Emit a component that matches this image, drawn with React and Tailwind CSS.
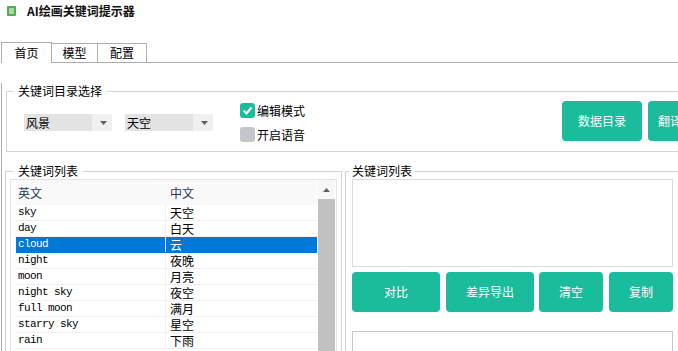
import React from "react";

const rows = [
  ["sky", "天空"],
  ["day", "白天"],
  ["cloud", "云"],
  ["night", "夜晚"],
  ["moon", "月亮"],
  ["night sky", "夜空"],
  ["full moon", "满月"],
  ["starry sky", "星空"],
  ["rain", "下雨"],
];

const Dropdown = ({ label }) => (
  <div className="flex h-[17px] w-[88px] bg-[#f0f0f0]">
    <div className="w-[68px] bg-[#e3e3e3] pl-[2px] text-[12px] leading-[17px] text-black">{label}</div>
    <div className="flex flex-1 items-center justify-center pl-[2px]">
      <svg width="7" height="4" viewBox="0 0 7 4">
        <path d="M0 0h7L3.5 4z" fill="#606060" />
      </svg>
    </div>
  </div>
);

const Check = ({ checked, label }) => (
  <div className="flex h-[15px] items-center">
    {checked ? (
      <div className="flex h-[15px] w-[15px] items-center justify-center rounded-[3px] bg-[#1abc9c]">
        <svg width="11" height="9" viewBox="0 0 11 9">
          <path d="M1.5 4.5l3 3 5-6" fill="none" stroke="#fff" strokeWidth="2" />
        </svg>
      </div>
    ) : (
      <div className="h-[15px] w-[15px] rounded-[3px] bg-[#c3c7cb]" />
    )}
    <span className="ml-[2px] text-[12px] leading-[15px] text-black">{label}</span>
  </div>
);

const TealButton = ({ children, w, className = "" }) => (
  <button
    className={`flex h-[40px] shrink-0 items-center justify-center rounded-[4px] bg-[#1abc9c] text-[12px] font-normal text-white ${w} ${className}`}
  >
    {children}
  </button>
);

const Tab = ({ children, active, w, first }) =>
  active ? (
    <div className={`flex h-[21px] items-center justify-center border border-b-0 border-[#adadad] bg-white text-[12px] ${w}`}>
      {children}
    </div>
  ) : (
    <div
      className={`flex h-[20px] items-center justify-center border border-[#adadad] bg-white text-[12px] ${first ? "" : "border-l-0"} ${w}`}
    >
      {children}
    </div>
  );

export default function App() {
  return (
    <div className="h-[351px] w-[678px] overflow-hidden bg-white font-['Microsoft_YaHei','Noto_Sans_CJK_SC',sans-serif] text-black">
      {/* title */}
      <div className="h-[42px]">
        <div className="flex h-[21px] items-center pl-[7px]">
          <svg width="9" height="10" viewBox="0 0 9 10">
            <rect width="9" height="10" rx="1" fill="#4caf50" />
            <path d="M2 3h5M2 5h5M2 7h5" stroke="#fff" strokeWidth="1" />
          </svg>
          <span className="ml-[11px] text-[12px] font-bold leading-[21px] text-[#111]">AI绘画关键词提示器</span>
        </div>
      </div>

      {/* tabs */}
      <div className="flex h-[21px] items-end pl-[1px]">
        <Tab active w="w-[51px]">首页</Tab>
        <Tab w="w-[46px]">模型</Tab>
        <Tab w="w-[49px]">配置</Tab>
        <div className="h-[20px] flex-1 border-b border-[#adadad]" />
      </div>

      <div className="ml-[1px] h-[300px] border-l border-[#adadad]">
        {/* group 1 */}
        <fieldset className="ml-[4px] mt-[20px] h-[69px] w-[720px] border border-[#d4d4d4]">
          <legend className="ml-[6px] px-[5px] text-[12px] leading-[16px]">关键词目录选择</legend>
          <div className="flex items-start pl-[17px]">
            <div className="mt-[15px]">
              <Dropdown label="风景" />
            </div>
            <div className="ml-[13px] mt-[15px]">
              <Dropdown label="天空" />
            </div>
            <div className="ml-[27px] mt-[4px] flex w-[322px] flex-col gap-[9px]">
              <Check checked label="编辑模式" />
              <Check label="开启语音" />
            </div>
            <div className="mt-[2px] flex">
              <TealButton w="w-[80px]">数据目录</TealButton>
              <TealButton w="w-[44px]" className="ml-[6px]">翻译</TealButton>
            </div>
          </div>
        </fieldset>

        <div className="mt-[11px] flex">
          {/* left list group */}
          <fieldset className="ml-[3px] h-[220px] w-[337px] shrink-0 border border-[#d4d4d4]">
            <legend className="ml-[7px] px-[5px] text-[12px] leading-[16px]">关键词列表</legend>
            <div className="ml-[4px] flex h-[200px] w-[327px] border border-[#e3e3e3] bg-white pl-[5px]">
              <div className="w-[301px]">
                <div className="flex h-[25px] items-center bg-[#f9f9f9] text-[12px] text-[#1e395b]">
                  <div className="w-[150px] pl-[2px]">英文</div>
                  <div className="pl-[4px]">中文</div>
                </div>
                {rows.map(([en, zh], i) => {
                  const sel = i === 2;
                  return (
                    <div
                      key={en}
                      className={`flex h-[16px] border-b ${sel ? "border-[#0078d7] bg-[#0078d7] text-white" : "border-[#f0f0f0] text-black"}`}
                    >
                      <div
                        className={`w-[150px] border-r pl-[2px] font-['Liberation_Mono',monospace] text-[11px] leading-[15px] tracking-[-0.6px] ${sel ? "border-white" : "border-[#f0f0f0]"}`}
                      >
                        {en}
                      </div>
                      <div className="pl-[4px] text-[12px] leading-[15px]">{zh}</div>
                    </div>
                  );
                })}
              </div>
              <div className="ml-[1px] flex w-[17px] flex-col">
                <div className="flex h-[19px] items-center justify-center bg-[#f7f7f7]">
                  <svg width="7" height="4" viewBox="0 0 7 4">
                    <path d="M3.5 0L7 4H0z" fill="#606060" />
                  </svg>
                </div>
                <div className="flex-1 bg-[#c1c1c1]" />
              </div>
            </div>
          </fieldset>

          {/* right group */}
          <fieldset className="ml-[3px] h-[220px] w-[400px] shrink-0 border border-[#d4d4d4]">
            <legend className="ml-[3px] px-[3px] text-[12px] leading-[16px]">关键词列表</legend>
            <div className="ml-[6px] w-[321px]">
              <div className="h-[88px] border border-[#dcdcdc] bg-white" />
              <div className="mt-[5px] flex">
                <TealButton w="w-[88px]">对比</TealButton>
                <TealButton w="w-[88px]" className="ml-[6px]">差异导出</TealButton>
                <TealButton w="w-[64px]" className="ml-[5px]">清空</TealButton>
                <TealButton w="w-[64px]" className="ml-[6px]">复制</TealButton>
              </div>
              <div className="mt-[19px] h-[60px] border border-[#c8c8c8]" />
            </div>
          </fieldset>
        </div>
      </div>
    </div>
  );
}
